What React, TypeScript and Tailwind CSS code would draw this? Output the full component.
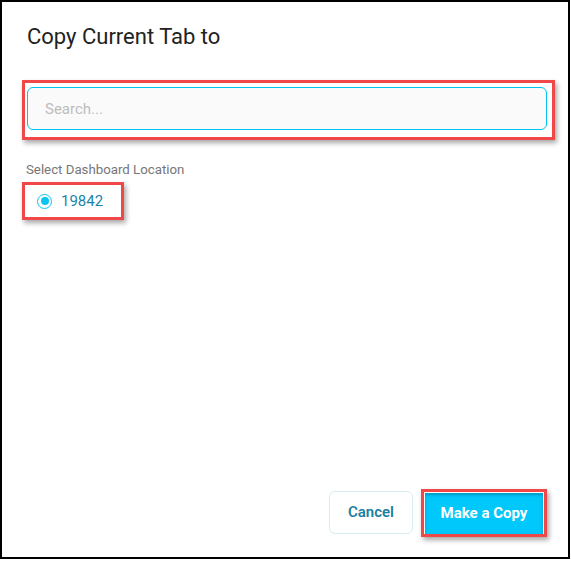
import { useState } from 'react';

export default function App() {
  const [query, setQuery] = useState('');
  const [selected, setSelected] = useState('19842');

  return (
    <div className="w-[571px] h-[561px] bg-white">
      <div className="w-[570px] h-[559px] border-2 border-black bg-white flex flex-col px-[20px] font-['Roboto',sans-serif]">
        {/* Title */}
        <h1 className="mt-[20px] ml-[5px] text-[22px] leading-[30px] text-[#222222] font-normal">Copy Current Tab to</h1>

        {/* Search */}
        <div className="mt-[28px] w-[533px] border-[3px] border-[#f04848] pt-[4px] pl-[2px] pr-[5px] pb-[7px] shadow-[2px_3px_5px_rgba(0,0,0,0.35)]">
          <input
            value={query}
            onChange={(e) => setQuery(e.target.value)}
            placeholder="Search..."
            className="w-[520px] h-[43px] rounded-[6px] border border-[#00c4f0] bg-[#fafafa] pl-[17px] text-[15px] text-[#333333] placeholder:text-[#bdbdbd] outline-none"
          />
        </div>

        {/* Location */}
        <div className="mt-[22px] ml-[4px] text-[13.25px] leading-[16px] text-[#767676]">Select Dashboard Location</div>
        <div className="mt-[4px] w-[102px] h-[38px] border-[3px] border-[#f04848] flex items-center pl-[12px] gap-[9px] shadow-[2px_3px_5px_rgba(0,0,0,0.35)]">
          <button
            onClick={() => setSelected('19842')}
            className="w-[15px] h-[15px] rounded-full border-[1.5px] border-[#0cc4f2] flex items-center justify-center"
          >
            {selected === '19842' && <span className="w-[8px] h-[8px] rounded-full bg-[#0cc4f2]" />}
          </button>
          <span className="text-[15px] leading-[20px] text-[#1b84a6]">19842</span>
        </div>

        <div className="flex-1" />

        {/* Actions */}
        <div className="flex justify-end items-end gap-[8px] pr-[1px] pb-[20px]">
          <button className="mb-[3px] w-[84px] h-[43px] rounded-[6px] border border-[#d6edf2] bg-white text-[15px] font-semibold text-[#1a7fa1]">
            Cancel
          </button>
          <div className="border-[3px] border-[#f04848] pt-[1px] px-[1px] shadow-[2px_3px_5px_rgba(0,0,0,0.35)]">
            <button className="w-[118px] h-[41px] bg-[#00c8fb] text-[15px] font-bold text-white shadow-[inset_0_2px_3px_rgba(0,60,90,0.35)]">
              Make a Copy
            </button>
          </div>
        </div>
      </div>
    </div>
  );
}
